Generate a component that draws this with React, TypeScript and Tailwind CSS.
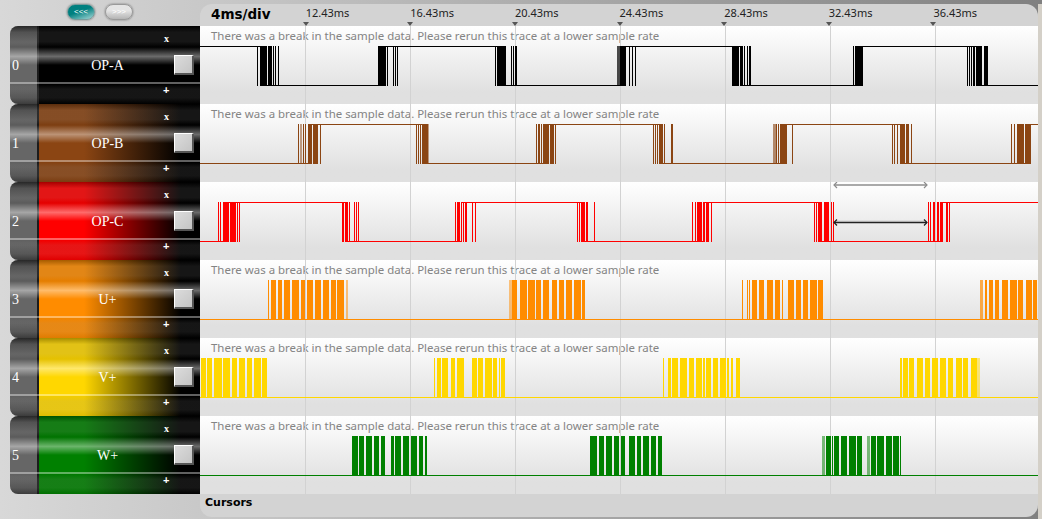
import React from 'react';

type Bar = number | [number, number] | [number, number, number];

const gridX = [305, 410, 515, 620, 725, 830, 935];
const ticks = ['12.43ms', '16.43ms', '20.43ms', '24.43ms', '28.43ms', '32.43ms', '36.43ms'];

const channels: {
  name: string;
  color: string;
  panel: string;
  note: boolean;
  start: number;
  flips: number[];
  bars: Bar[];
}[] = [
  {
    name: 'OP-A',
    color: '#000000',
    panel: 'bg-black',
    note: true,
    start: 1,
    flips: [260, 386, 497, 622, 743, 860, 980],
    bars: [
      257, [260, 267], [268, 272], 273, 275, 278,
      [378, 386], 387, 393, 395, 397,
      495, [497, 506], 511, 513, [515, 517],
      [617, 620, 0.7], [620, 623], [623, 626], 629, 632, 635,
      [732, 739], [740, 743], 744, 747, [749, 751],
      853, [855, 863],
      967, 969, 971, 973, 974, [976, 982], [984, 988],
    ],
  },
  {
    name: 'OP-B',
    color: '#8b4513',
    panel: 'bg-[linear-gradient(90deg,#8b4513_28%,#000_88%)]',
    note: true,
    start: 0,
    flips: [308, 428, 545, 660, 780, 905, 1025],
    bars: [
      298, [300, 302, 0.5], 303, 305, [308, 312], [313, 318], 320,
      416, 418, 420, [422, 428], [428, 429, 0.5],
      536, 538, 539, 541, [543, 549], [550, 554], 555,
      653, 655, 657, [659, 663], 664, 671, 672,
      [773, 776, 0.6], [776, 777], 778, [780, 786], 786, 792,
      892, 894, 897, [900, 905], [906, 909], 911,
      1011, 1014, [1017, 1024], [1025, 1031],
    ],
  },
  {
    name: 'OP-C',
    color: '#ff0000',
    panel: 'bg-[linear-gradient(90deg,#ff0000_28%,#000_88%)]',
    note: false,
    start: 0,
    flips: [225, 346, 462, 585, 705, 822, 940],
    bars: [
      218, 220, [223, 229], [230, 236], 237, 239,
      [342, 344], [345, 348], 349, 354, 356, 358,
      455, [457, 460], 461, 463, [465, 467], 472, 475,
      577, 579, [581, 585], [586, 588], 594,
      692, 695, [697, 702], [703, 705], [706, 709], 711,
      814, 816, [818, 822], [824, 829], 831, 833,
      928, 930, [933, 935], [937, 939], [940, 943], 946, 947, 949,
    ],
  },
  {
    name: 'U+',
    color: '#ff8c00',
    panel: 'bg-[linear-gradient(90deg,#ff8c00_28%,#000_88%)]',
    note: true,
    start: 0,
    flips: [],
    bars: [
      268, [271, 276], [278, 282], [284, 290], [292, 299], [301, 305], [307, 313], [315, 321], [323, 329], [331, 336], [337, 341], [341, 344], [346, 348, 0.5],
      [509, 512, 0.5], [512, 517], [520, 527], [528, 535], [536, 541], [543, 549], [552, 557], [559, 564], [566, 572], [574, 581], [582, 585],
      742, 747, 749, [752, 757], [759, 764], [767, 773], [775, 780], 782, [788, 794], [796, 801], [803, 808], [810, 817], [818, 823],
      [980, 983, 0.7], [985, 987], [989, 993], [995, 999], [1002, 1008], [1010, 1017], [1018, 1023], [1026, 1032], [1033, 1037],
    ],
  },
  {
    name: 'V+',
    color: '#ffd700',
    panel: 'bg-[linear-gradient(90deg,#ffd700_28%,#000_88%)]',
    note: true,
    start: 0,
    flips: [],
    bars: [
      [201, 206], [207, 212], [214, 217], [217, 222], [223, 230], [232, 237], [239, 245], [247, 252], [254, 261], [262, 267],
      434, [437, 441], [442, 448], [451, 455], [457, 464], [472, 477], [478, 483], [485, 492], [493, 497], 499, [501, 505],
      663, [668, 671], [672, 678], [680, 687], [689, 694], [696, 702], [703, 705], [706, 711], [713, 718], [720, 726], [727, 729], [731, 733], [736, 740],
      [900, 902], [903, 908], [909, 914], [917, 923], [925, 930], [932, 938], [940, 946], [948, 953], [956, 962], [963, 968], [971, 977], [977, 980, 0.5],
    ],
  },
  {
    name: 'W+',
    color: '#008000',
    panel: 'bg-[linear-gradient(90deg,#008000_28%,#000_88%)]',
    note: true,
    start: 0,
    flips: [],
    bars: [
      [352, 358], [359, 364], [366, 372], [374, 379], [381, 385], [391, 394], [395, 401], [403, 409], [411, 417], [419, 423], [425, 427],
      [590, 597], [599, 604], [606, 612], [614, 619], [621, 625], [629, 635], [637, 641], [643, 649], [651, 656], [658, 662],
      [822, 825, 0.5], [826, 831], 832, [834, 839], [841, 847], [849, 856], [857, 862], [867, 870, 0.5], [871, 876], [877, 884], [886, 892], [893, 899], 900,
    ],
  },
];

function CursorArrow({ y, color }: { y: number; color: string }) {
  return (
    <g stroke={color} fill="none">
      <path d={`M834 ${y}H927`} strokeWidth="1.5" />
      <path d={`M837 ${y - 3}L834 ${y}L837 ${y + 3}M924 ${y - 3}L927 ${y}L924 ${y + 3}`} strokeWidth="1.2" />
    </g>
  );
}

function Trace({ color, start, flips, bars, cursors }: { color: string; start: number; flips: number[]; bars: Bar[]; cursors: boolean }) {
  const edges = [200, ...flips, 1038];
  return (
    <svg className="absolute inset-0 w-[838px] h-[78px]" viewBox="200 0 838 78" shapeRendering="crispEdges">
      {gridX.map((x) => (
        <rect key={x} x={x} y={0} width={1} height={78} fill="#d2d2d2" />
      ))}
      {edges.slice(1).map((x, i) => {
        const high = (start + i) % 2 === 1;
        return <rect key={i} x={edges[i]} y={high ? 20 : 59} width={x - edges[i]} height={1} fill={color} />;
      })}
      {bars.map((b, i) => {
        const [a, e, op] = typeof b === 'number' ? [b, b + 1, 1] : [b[0], b[1], b[2] ?? 1];
        return <rect key={i} x={a} y={20} width={e - a} height={40} fill={color} opacity={op} />;
      })}
      {cursors && (
        <g shapeRendering="auto">
          <CursorArrow y={3} color="#8c8c8c" />
          <path d="M836 39H925" stroke="#cfcfcf" />
          <CursorArrow y={40.5} color="#222222" />
        </g>
      )}
    </svg>
  );
}

function ChannelControl({ index, name, panel }: { index: number; name: string; panel: string }) {
  return (
    <div className="relative flex h-[78px] overflow-hidden rounded-l-[8px]">
      <div className="flex w-[29px] items-center border-r-2 border-[#1c1c1c] bg-[linear-gradient(180deg,#3c3c3c_0%,#666666_22%,#666666_78%,#444444_100%)] pl-[2px] font-[Liberation_Serif,serif] text-[14px] text-white">
        {index}
      </div>
      <div className={`flex flex-1 items-center ${panel}`}>
        <div className="z-10 ml-[2px] w-[133px] text-center font-[Liberation_Serif,serif] text-[14px] text-white">{name}</div>
        <div className="z-10 h-[20px] w-[20px] border border-b-2 border-r-2 border-white border-b-[#555] border-r-[#555] bg-[linear-gradient(135deg,#dcdcdc,#c4c4c4)]" />
      </div>
      <div className="pointer-events-none absolute inset-0 bg-[linear-gradient(180deg,rgba(0,0,0,0.35)_0%,rgba(110,110,110,0.2)_8%,rgba(110,110,110,0.2)_20%,rgba(0,0,0,0.1)_27%,rgba(255,255,255,0.42)_39%,rgba(255,255,255,0)_50%,rgba(255,255,255,0)_72%,rgba(255,255,255,0.38)_72%,rgba(255,255,255,0.38)_74%,rgba(0,0,0,0.05)_75%,rgba(120,120,120,0.18)_81%,rgba(120,120,120,0.18)_92%,rgba(0,0,0,0.12)_100%)]" />
      <span className="absolute left-[154px] top-[7px] font-[Liberation_Serif,serif] text-[10px] leading-[12px] font-bold text-white">x</span>
      <span className="absolute left-[153px] top-[58px] font-[Liberation_Sans,sans-serif] text-[11px] leading-[12px] font-bold text-white">+</span>
    </div>
  );
}

export default function App() {
  return (
    <div className="flex h-[519px] w-[1042px] overflow-hidden bg-[linear-gradient(90deg,#d8d8d8,#c4c4c4_25%,#808080)]">
      <div className="w-[200px] shrink-0 pl-[10px]">
        <div className="flex h-[26px] gap-[10px] pl-[57px] pt-[4px] font-[Liberation_Sans,sans-serif]">
          <button className="h-[16px] w-[28px] rounded-full border border-[#7a9c9c] bg-[linear-gradient(160deg,#008080_45%,#a8d8d8)] text-[8px] leading-[12px] text-white shadow-[0_0_2px_#666]">
            &lt;&lt;&lt;
          </button>
          <button className="h-[16px] w-[28px] rounded-full border border-[#999] bg-[linear-gradient(180deg,#e4e4e4_40%,#b4b4b4)] text-[8px] leading-[12px] text-white shadow-[0_0_2px_#666]">
            &gt;&gt;&gt;
          </button>
        </div>
        {channels.map((c, i) => (
          <ChannelControl key={c.name} index={i} name={c.name} panel={c.panel} />
        ))}
      </div>

      <div className="mt-[4px] h-[513px] w-[838px] shrink-0 font-[Noto_Sans,sans-serif]">
        <div className="flex h-[22px] rounded-t-[12px] bg-[#d3d3d3] pl-[11px]">
          <div className="w-[95px] pt-[1px] font-[DejaVu_Sans,sans-serif] text-[13.5px] leading-[18px] font-bold text-black">4ms/div</div>
          {ticks.map((t) => (
            <div key={t} className="relative w-[105px] pt-[2px] text-[11px] leading-[14px] text-[#222]">
              {t}
              <span className="absolute bottom-0 left-[-3px] h-0 w-0 border-x-[3px] border-t-[4px] border-x-transparent border-t-[#555]" />
            </div>
          ))}
        </div>
        {channels.map((c) => (
          <div key={c.name} className="relative h-[78px] bg-gradient-to-b from-white to-[#e0e0e0] to-85%">
            {c.note && (
              <div className="pl-[11px] pt-[2px] text-[11.45px] leading-[15px] text-[#848484]">
                There was a break in the sample data. Please rerun this trace at a lower sample rate
              </div>
            )}
            <Trace color={c.color} start={c.start} flips={c.flips} bars={c.bars} cursors={c.name === 'OP-C'} />
          </div>
        ))}
        <div className="h-[23px] rounded-b-[12px] bg-[#d3d3d3] pl-[5px] pt-[1px] font-[DejaVu_Sans,sans-serif] text-[11px] leading-[16px] font-bold text-black">
          Cursors
        </div>
      </div>

      <div className="mt-[4px] w-[4px] bg-[#d4d0c8]" />
    </div>
  );
}
